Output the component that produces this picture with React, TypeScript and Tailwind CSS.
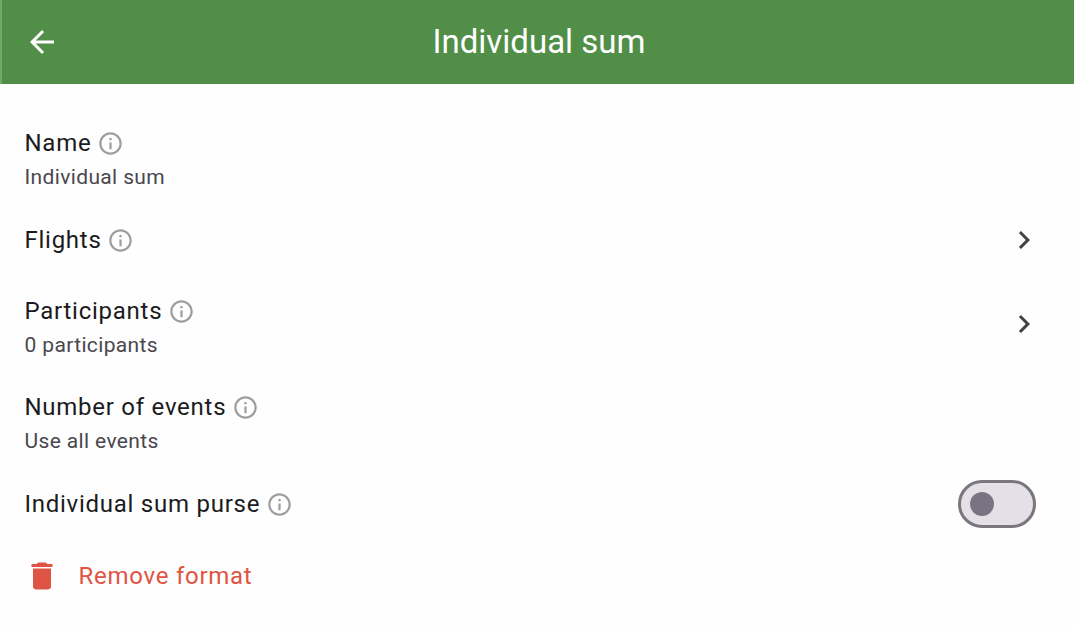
import type { ReactNode } from "react";
import { MdArrowBack, MdChevronRight, MdDelete, MdInfoOutline } from "react-icons/md";

function Label({ title, sub }: { title: string; sub?: string }) {
  return (
    <div className="flex flex-col">
      <div className="flex h-8 items-center gap-[5.5px]">
        <span className="text-[24px] leading-8 tracking-[0.74px] text-[#1b1b1d]">{title}</span>
        <MdInfoOutline className="mt-px size-[27px] text-[#9e9e9e]" />
      </div>
      {sub && <span className="mt-0.5 text-[21px] leading-8 tracking-[0.36px] text-[#49474d]">{sub}</span>}
    </div>
  );
}

function Row({ className, children }: { className: string; children: ReactNode }) {
  return <div className={`flex w-full justify-between pr-[38px] pl-[24.5px] ${className}`}>{children}</div>;
}

export default function App() {
  return (
    <div className="flex h-[626px] w-full flex-col bg-[#fefefe] font-['Roboto',sans-serif]">
      <header className="grid h-[84px] shrink-0 grid-cols-[84px_1fr_82px] items-center border-l-2 border-[#73a76b] bg-[#518e47] text-white">
        <MdArrowBack className="ml-[22px] size-9" />
        <h1 className="text-center text-[33px] leading-10">Individual sum</h1>
      </header>
      <main className="flex flex-col pt-[30px]">
        <Row className="h-[90px] items-start pt-[13px]"><Label title="Name" sub="Individual sum" /></Row>
        <Row className="h-[72px] items-center"><Label title="Flights" /><MdChevronRight className="-mr-1.5 size-9 text-[#424144]" /></Row>
        <Row className="h-[96px] items-center"><div className="pt-2"><Label title="Participants" sub="0 participants" /></div><MdChevronRight className="-mr-1.5 size-9 text-[#424144]" /></Row>
        <Row className="h-[96px] items-center pt-2"><Label title="Number of events" sub="Use all events" /></Row>
        <Row className="h-[72px] items-center">
          <Label title="Individual sum purse" />
          <button aria-label="Individual sum purse" className="flex h-12 w-[78px] items-center rounded-full border-[3px] border-[#79767e] bg-[#e5e0e8] pl-[9px]">
            <span className="size-6 rounded-full bg-[#7a7482]" />
          </button>
        </Row>
        <Row className="h-[72px] items-center">
          <button className="-ml-[0.5px] flex items-center gap-[18.5px] text-[#df5443]">
            <MdDelete className="size-9" />
            <span className="text-[24px] leading-8 tracking-[0.74px]">Remove format</span>
          </button>
        </Row>
      </main>
    </div>
  );
}
